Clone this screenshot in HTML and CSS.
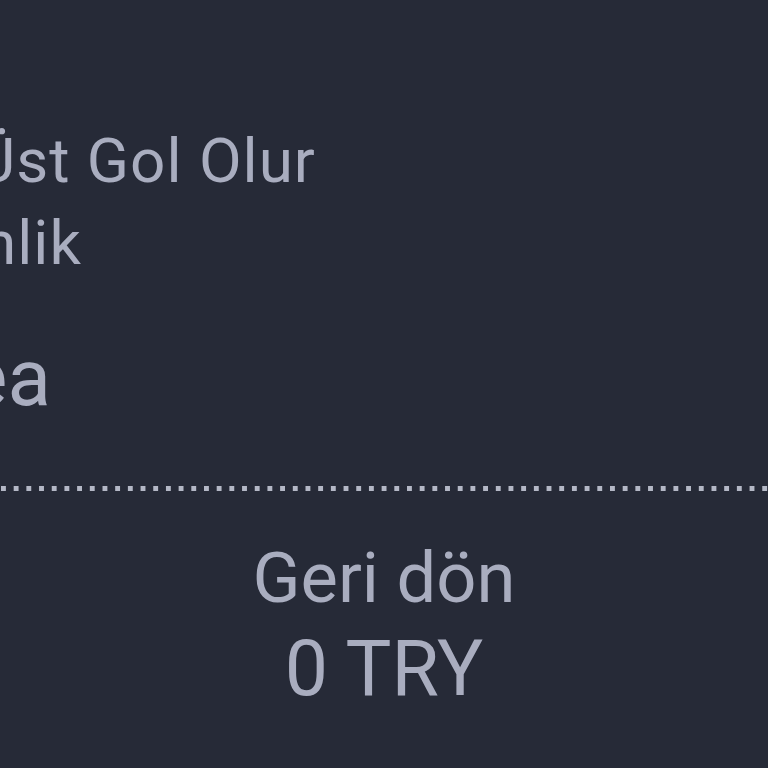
FILE: index.html
```html
<!DOCTYPE html>
<html lang="tr">
<head>
<meta charset="utf-8">
<link rel="stylesheet" href="styles.css">
</head>
<body>
<div class="slip">
  <div class="details">
    <div class="market"><span class="cut cut-market">Üst Gol Olur</span></div>
    <div class="type"><span class="cut cut-type">nlik</span></div>
    <div class="team"><span class="cut cut-team">ea</span></div>
  </div>
  <div class="separator"></div>
  <div class="return">
    <div class="return-label">Geri dön</div>
    <div class="return-value">0 TRY</div>
  </div>
</div>
</body>
</html>
```
FILE: styles.css
```css
html, body {
  margin: 0;
  padding: 0;
  background: #262a37;
  height: 100%;
  overflow: hidden;
}
.slip {
  font-family: Roboto, "Liberation Sans", sans-serif;
  color: #a9adbf;
  padding-top: 120px;
}
.details {
  white-space: nowrap;
  overflow: hidden;
}
.market, .type {
  font-size: 62px;
  line-height: 82px;
  letter-spacing: 1px;
}
.team {
  font-size: 80px;
  line-height: 100px;
  margin-top: 44px;
}
.cut { display: inline-block; }
.cut-market { margin-left: -25px; }
.cut-type { margin-left: -18px; }
.cut-team { margin-left: -35px; }
.separator {
  margin-top: 58px;
  height: 5px;
  background-image: linear-gradient(to right, #b4b8c6 0 5px, transparent 5px);
  background-size: 12.7px 5px;
  background-repeat: repeat-x;
  background-position: 1px 0;
}
.return {
  margin-top: 42px;
  text-align: center;
}
.return-label {
  font-size: 70.5px;
  line-height: 90px;
}
.return-value {
  font-size: 77px;
  line-height: 90px;
  margin-top: 1px;
}
```
